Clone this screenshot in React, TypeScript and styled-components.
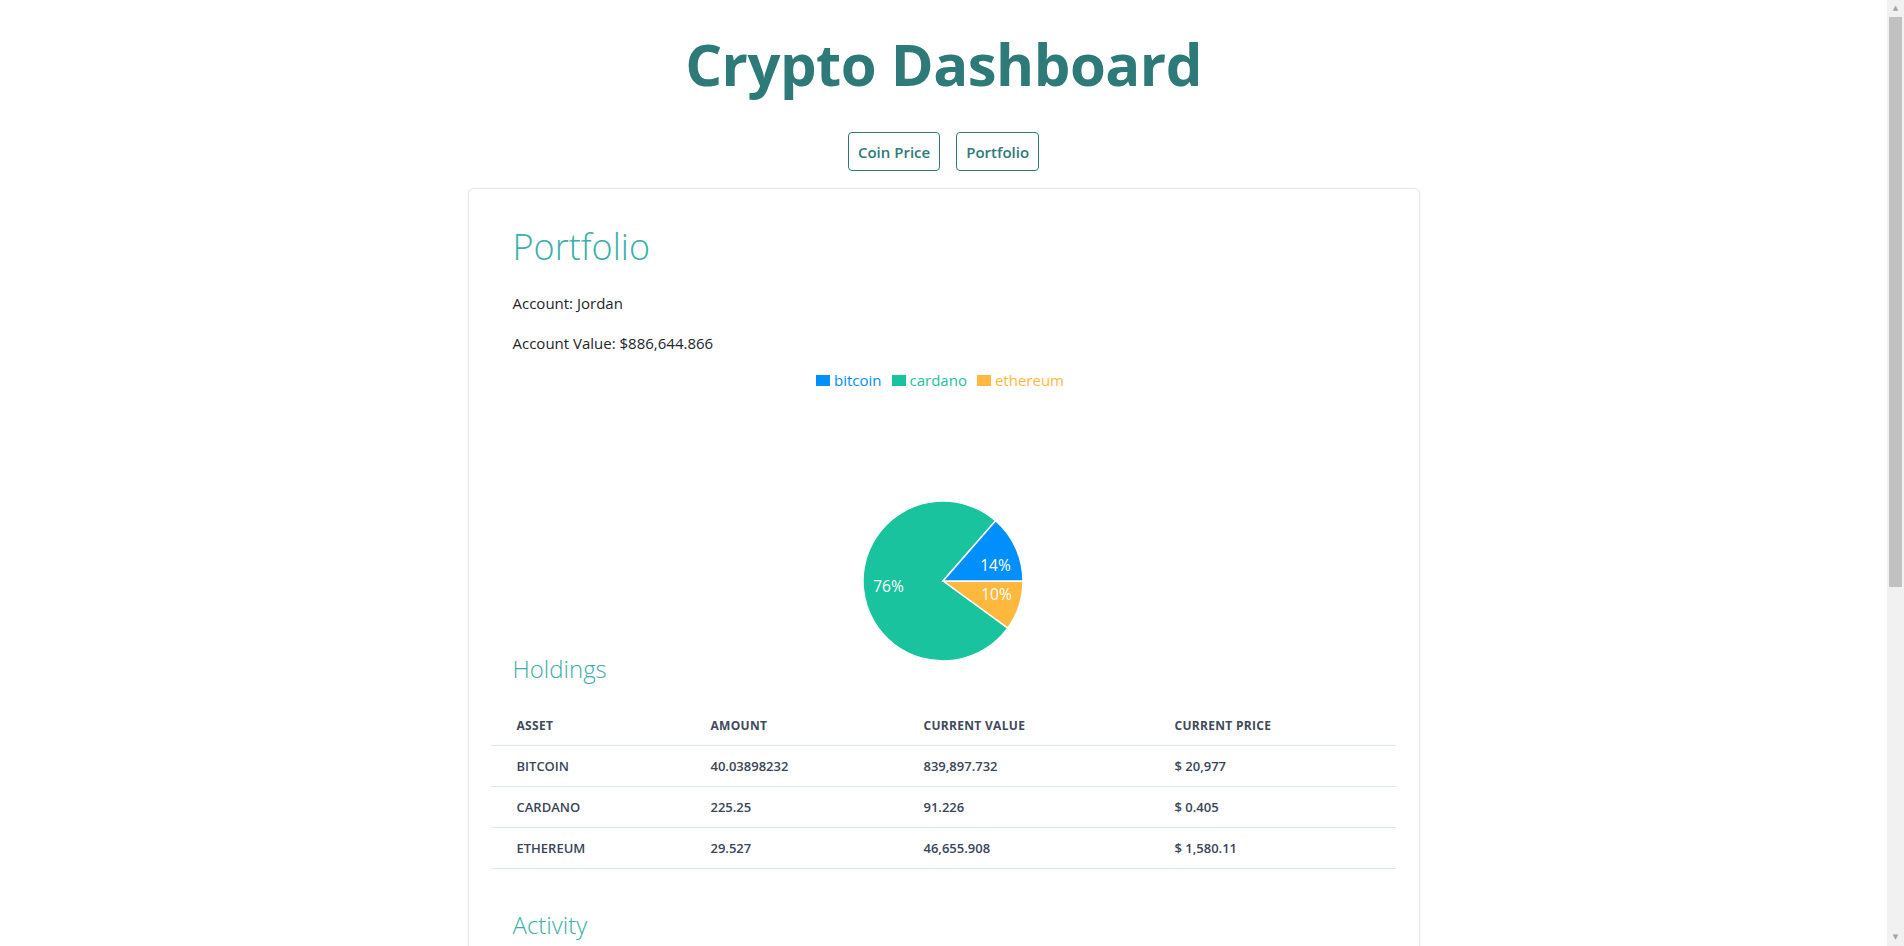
import styled, { createGlobalStyle } from 'styled-components';

const GlobalStyle = createGlobalStyle`
  body {
    margin: 0;
    background: #ffffff;
    font-family: 'Open Sans', 'Noto Sans', sans-serif;
    color: #212529;
  }
`;

const holdings = [
  { asset: 'bitcoin', amount: '40.03898232', value: '839,897.732', price: '$ 20,977' },
  { asset: 'cardano', amount: '225.25', value: '91.226', price: '$ 0.405' },
  { asset: 'ethereum', amount: '29.527', value: '46,655.908', price: '$ 1,580.11' },
];

const activity = [
  { date: '2022-09-14', type: 'Buy', asset: 'bitcoin', amount: '10.5' },
  { date: '2022-09-02', type: 'Buy', asset: 'cardano', amount: '125.25' },
  { date: '2022-08-28', type: 'Sell', asset: 'ethereum', amount: '2.473' },
  { date: '2022-08-19', type: 'Buy', asset: 'ethereum', amount: '12' },
  { date: '2022-08-11', type: 'Buy', asset: 'bitcoin', amount: '15.03898232' },
  { date: '2022-07-30', type: 'Buy', asset: 'cardano', amount: '100' },
  { date: '2022-07-21', type: 'Buy', asset: 'ethereum', amount: '20' },
  { date: '2022-07-12', type: 'Buy', asset: 'bitcoin', amount: '14.5' },
  { date: '2022-06-30', type: 'Deposit', asset: 'usd', amount: '500,000' },
  { date: '2022-06-22', type: 'Deposit', asset: 'usd', amount: '350,000' },
  { date: '2022-06-15', type: 'Deposit', asset: 'usd', amount: '100,000' },
];

const slices = [
  { name: 'bitcoin', color: '#008ffb', amount: 40.03898232 },
  { name: 'cardano', color: '#19c39e', amount: 225.25 },
  { name: 'ethereum', color: '#feb83e', amount: 29.527 },
];

const R = 80;
const C = 82;

const point = (deg: number) => {
  const rad = (deg * Math.PI) / 180;
  return [C + R * Math.cos(rad), C + R * Math.sin(rad)];
};

// drawn clockwise from 3 o'clock: ethereum, cardano, bitcoin
const PieChart = () => {
  const total = slices.reduce((s, x) => s + x.amount, 0);
  const order = [slices[2], slices[1], slices[0]];
  let start = 0;
  const labelPos: Record<string, [number, number]> = {
    bitcoin: [C + 52.5, C - 16.5],
    cardano: [C - 54.5, C + 5],
    ethereum: [C + 53.5, C + 13],
  };
  return (
    <svg width={164} height={164} viewBox="0 0 164 164">
      {order.map(s => {
        const sweep = (s.amount / total) * 360;
        const [x1, y1] = point(start);
        const [x2, y2] = point(start + sweep);
        const large = sweep > 180 ? 1 : 0;
        start += sweep;
        return (
          <path
            key={s.name}
            d={`M${C},${C} L${x1},${y1} A${R},${R} 0 ${large} 1 ${x2},${y2} Z`}
            fill={s.color}
            stroke="#fff"
            strokeWidth={1.5}
          />
        );
      })}
      {slices.map(s => (
        <text
          key={s.name}
          x={labelPos[s.name][0]}
          y={labelPos[s.name][1]}
          fill="#fff"
          fontSize={15.5}
          fontFamily="'Open Sans', sans-serif"
          textAnchor="middle"
          dominantBaseline="central"
        >
          {Math.round((s.amount / total) * 100)}%
        </text>
      ))}
    </svg>
  );
};

const App = () => {
  return (
    <>
      <GlobalStyle />
      <Page>
        <Title>Crypto Dashboard</Title>
        <Nav>
          <NavButton>Coin Price</NavButton>
          <NavButton>Portfolio</NavButton>
        </Nav>
        <Card>
          <Section>
            <PageHeading>Portfolio</PageHeading>
            <Info>Account: Jordan</Info>
            <Info>Account Value: $886,644.866</Info>
          </Section>
          <Legend>
            {slices.map(s => (
              <LegendItem key={s.name} $color={s.color}>
                <Marker $color={s.color} />
                {s.name}
              </LegendItem>
            ))}
          </Legend>
          <PieArea>
            <PieChart />
          </PieArea>
          <Section>
            <SubHeading>Holdings</SubHeading>
          </Section>
          <Table>
            <colgroup>
              <col style={{ width: 194 }} />
              <col style={{ width: 213 }} />
              <col style={{ width: 251 }} />
              <col />
            </colgroup>
            <thead>
              <tr>
                <Th>Asset</Th>
                <Th>Amount</Th>
                <Th>Current Value</Th>
                <Th>Current Price</Th>
              </tr>
            </thead>
            <tbody>
              {holdings.map(h => (
                <tr key={h.asset}>
                  <Td $upper>{h.asset}</Td>
                  <Td>{h.amount}</Td>
                  <Td>{h.value}</Td>
                  <Td>{h.price}</Td>
                </tr>
              ))}
            </tbody>
          </Table>
          <Section>
            <SubHeading $top={41}>Activity</SubHeading>
          </Section>
          <Table>
            <colgroup>
              <col style={{ width: 194 }} />
              <col style={{ width: 213 }} />
              <col style={{ width: 251 }} />
              <col />
            </colgroup>
            <thead>
              <tr>
                <Th>Date</Th>
                <Th>Type</Th>
                <Th>Asset</Th>
                <Th>Amount</Th>
              </tr>
            </thead>
            <tbody>
              {activity.map((a, i) => (
                <tr key={i}>
                  <Td>{a.date}</Td>
                  <Td $upper>{a.type}</Td>
                  <Td $upper>{a.asset}</Td>
                  <Td>{a.amount}</Td>
                </tr>
              ))}
            </tbody>
          </Table>
        </Card>
      </Page>
      <ScrollTrack>
        <ScrollArrow>▲</ScrollArrow>
        <ScrollThumb />
        <ScrollSpacer />
        <ScrollArrow>▼</ScrollArrow>
      </ScrollTrack>
    </>
  );
};

const Page = styled.div`
  display: flex;
  flex-direction: column;
  align-items: center;
  padding: 0 17px 24px 0;
`;

const Title = styled.h1`
  margin: 28px 0 0;
  font-size: 58px;
  line-height: 72px;
  font-weight: 700;
  letter-spacing: -0.5px;
  color: #2e7a78;
`;

const Nav = styled.nav`
  display: flex;
  gap: 16px;
  margin: 32px 0 17px;
`;

const NavButton = styled.button`
  height: 39px;
  padding: 0 9px;
  background: #fff;
  border: 1px solid #2e7a78;
  border-radius: 4px;
  font-family: 'Open Sans', sans-serif;
  font-size: 15px;
  font-weight: 600;
  color: #2e7a78;
  cursor: pointer;
`;

const Card = styled.div`
  box-sizing: border-box;
  width: 952px;
  padding: 34px 23px 30px 22px;
  border: 1px solid #e3e6ea;
  border-radius: 6px;
  box-shadow: 0 1px 4px rgba(0, 0, 0, 0.05);
`;

const Section = styled.div`
  padding-left: 22px;
`;

const PageHeading = styled.h2`
  margin: 0 0 20px;
  font-size: 36px;
  line-height: 48px;
  font-weight: 300;
  color: #3aafa9;
`;

const Info = styled.p`
  margin: 0 0 16px;
  font-size: 15px;
  line-height: 24px;
  color: #212529;
`;

const Legend = styled.div`
  display: flex;
  justify-content: center;
  gap: 10px;
  height: 18px;
  margin-left: -6px;
`;

const LegendItem = styled.div<{ $color: string }>`
  display: flex;
  align-items: center;
  gap: 4px;
  font-size: 15px;
  line-height: 18px;
  color: ${p => p.$color};
`;

const Marker = styled.span<{ $color: string }>`
  width: 14px;
  height: 11px;
  background: ${p => p.$color};
`;

const PieArea = styled.div`
  height: 265px;
  box-sizing: border-box;
  padding-top: 110px;
  display: flex;
  justify-content: center;
`;

const SubHeading = styled.h3<{ $top?: number }>`
  margin: ${p => p.$top ?? 0}px 0 20px;
  font-size: 24px;
  line-height: 29px;
  font-weight: 300;
  color: #3aafa9;
`;

const Table = styled.table`
  width: 100%;
  border-collapse: collapse;
  table-layout: fixed;
`;

const Th = styled.th`
  padding: 14px 20px 10px 26px;
  text-align: left;
  font-size: 12px;
  line-height: 18px;
  font-weight: 700;
  text-transform: uppercase;
  letter-spacing: 0.3px;
  color: #3f4a5c;
  border-bottom: 1px solid #d5ebf3;
`;

const Td = styled.td<{ $upper?: boolean }>`
  padding: 12px 20px 12px 26px;
  font-size: 13px;
  line-height: 16px;
  font-weight: 600;
  color: #3a4558;
  text-transform: ${p => (p.$upper ? 'uppercase' : 'none')};
  border-bottom: 1px solid #d5ebf3;
`;

const ScrollTrack = styled.div`
  position: fixed;
  top: 0;
  right: 0;
  width: 17px;
  height: 100vh;
  display: flex;
  flex-direction: column;
  align-items: center;
  background: #f1f1f1;
`;

const ScrollArrow = styled.div`
  height: 17px;
  font-size: 7px;
  line-height: 17px;
  color: #a3a3a3;
  font-family: 'DejaVu Sans', sans-serif;
`;

const ScrollThumb = styled.div`
  width: 13px;
  height: 570px;
  background: #c1c1c1;
`;

const ScrollSpacer = styled.div`
  flex: 1;
`;

export default App;
